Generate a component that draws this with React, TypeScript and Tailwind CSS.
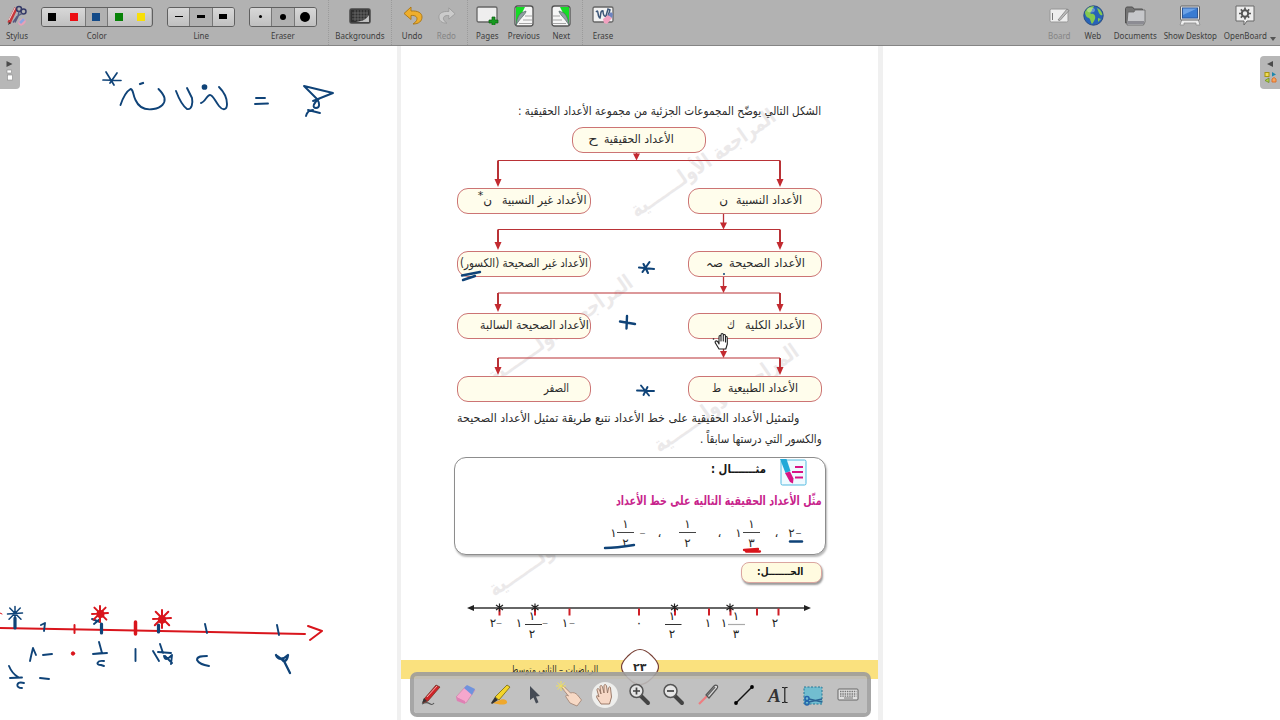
import { useLayoutEffect, useRef, type ReactNode } from "react";

const INK = "#0f4378";
const RED = "#d9151c";

/* Arabic text squeezed or stretched horizontally to fill its own box. */
function Fit({ children, className = "" }: { children: ReactNode; className?: string }) {
  const outer = useRef<HTMLSpanElement>(null);
  const inner = useRef<HTMLSpanElement>(null);
  useLayoutEffect(() => {
    const fit = () => {
      const o = outer.current;
      const i = inner.current;
      if (o && i && i.offsetWidth > 0) i.style.transform = `scaleX(${o.clientWidth / i.offsetWidth})`;
    };
    fit();
    document.fonts?.ready.then(fit);
  }, []);
  return (
    <span ref={outer} dir="rtl" className={`block shrink-0 whitespace-nowrap ${className}`}>
      <span ref={inner} className="inline-block origin-right">
        {children}
      </span>
    </span>
  );
}

function Tool({ label, w, dim = false, children }: { label: string; w: string; dim?: boolean; children: ReactNode }) {
  return (
    <div className={`flex shrink-0 flex-col items-center ${w}`}>
      <div className="flex h-[30px] items-center justify-center pt-[1px]">{children}</div>
      <span className={`scale-x-[.85] text-[9.4px] leading-[12px] whitespace-nowrap ${dim ? "text-[#858585]" : "text-[#3d3d3d]"}`}>{label}</span>
    </div>
  );
}

const Sep = ({ m }: { m: string }) => <div className={`h-[45px] w-px shrink-0 border-l border-dotted border-[#9b9b9b] ${m}`} />;

function Segments({ items, active, w }: { items: ReactNode[]; active: number; w: string }) {
  return (
    <div className={`mt-[2px] flex h-[20px] overflow-hidden rounded-[3px] border border-[#606060] ${w}`}>
      {items.map((it, i) => (
        <div
          key={i}
          className={`flex flex-1 items-center justify-center ${
            i === active ? "border-x border-[#777] bg-[#b1b1b1]" : "bg-linear-to-b from-[#d8d8d8] to-[#c0c0c0]"
          }`}
        >
          {it}
        </div>
      ))}
    </div>
  );
}

function PageTurn({ flip = false }: { flip?: boolean }) {
  return (
    <svg width="20" height="22" viewBox="0 0 20 22" className={flip ? "-scale-x-100" : ""}>
      <rect x="1" y="1" width="18" height="20" rx="2.5" fill="#f6f6f6" stroke="#555" strokeWidth="1.3" />
      <path d="M2 2h9L2 20z" fill="#15dc25" />
      <path d="M11 11h7M9 15h9M5 18.500h13" stroke="#a4a4a4" />
      <path d="M12 6c0 3-5 6-10 14 1-6 2-9 5-12z" fill="#8fa0a2" stroke="#566" strokeWidth=".7" />
    </svg>
  );
}

function TopBar() {
  const colors = ["bg-black", "bg-[#ec0d12]", "bg-[#134a88]", "bg-[#078207]", "bg-[#f8df08]"];
  const lines = ["h-px", "h-[3px]", "h-[5px]"];
  const dots = ["size-[3px]", "size-[6px]", "size-[10px]"];
  return (
    <header className="flex h-[46px] shrink-0 items-start border-b border-[#858585] bg-[#b2b2b2] font-['Noto_Sans','Open_Sans',sans-serif]">
      <Tool label="Stylus" w="w-[34px]">
        <svg width="22" height="22" viewBox="0 0 22 22" fill="none">
          <ellipse cx="16" cy="17" rx="4" ry="3" fill="#e8a0b8" transform="rotate(-40 16 17)" />
          <path d="M13 17l4-4 2 2-4 4z" fill="#8aa6e0" />
          <path d="M10 3L3 18" stroke="#c8363a" strokeWidth="3.500" />
          <path d="M9 3L3 15" stroke="#f0dede" strokeWidth="1" />
          <path d="M2 20l1-3 2 1z" fill="#333" />
          <circle cx="13" cy="4" r="2.500" stroke="#353a68" strokeWidth="1.500" />
          <circle cx="17.500" cy="6.500" r="2.500" stroke="#353a68" strokeWidth="1.500" />
          <path d="M13 6.500l-1 5-3 6M16 8.500l-5 3-4 6" stroke="#555a80" strokeWidth="1.400" />
        </svg>
      </Tool>
      <Tool label="Color" w="w-[125px]">
        <Segments w="w-[112px]" active={2} items={colors.map((c) => <span key={c} className={`size-[8px] ${c}`} />)} />
      </Tool>
      <Tool label="Line" w="w-[84px]">
        <Segments w="w-[68px]" active={1} items={lines.map((c) => <span key={c} className={`w-[8px] bg-black ${c}`} />)} />
      </Tool>
      <Tool label="Eraser" w="w-[80px]">
        <Segments w="w-[68px]" active={1} items={dots.map((c) => <span key={c} className={`rounded-full bg-black ${c}`} />)} />
      </Tool>
      <Sep m="ml-[5px]" />
      <Tool label="Backgrounds" w="w-[61px]">
        <svg width="22" height="16" viewBox="0 0 22 16">
          <rect x="1" y="1" width="20" height="14" rx="1.500" fill="#303030" stroke="#4a4a4a" strokeWidth="1.500" />
          <path d="M3 5h16M3 8h16M3 11h16M6 2v11M9 2v11M12 2v11M15 2v11M18 2v11" stroke="#747474" strokeWidth=".7" />
          <path d="M4 14c8 0 13-2 16-7v7z" fill="#e4e4e4" opacity=".8" />
        </svg>
      </Tool>
      <Sep m="ml-[1px]" />
      <Tool label="Undo" w="w-[41px]">
        <svg width="20" height="20" viewBox="0 0 20 20">
          <path d="M8 1L1 7.500l7 6v-4c5-.5 7 2 5.500 5-.7 1.500-2 2.500-3.500 3.500 6 0 9-3 9-7 0-4-4-6.500-11-6z" fill="#efae2c" stroke="#a97513" strokeWidth=".9" />
        </svg>
      </Tool>
      <Tool label="Redo" w="w-[27px]" dim>
        <svg width="18" height="20" viewBox="0 0 20 20" className="-scale-x-100">
          <path d="M8 1L1 7.500l7 6v-4c5-.5 7 2 5.500 5-.7 1.500-2 2.500-3.500 3.500 6 0 9-3 9-7 0-4-4-6.500-11-6z" fill="#cbcbcb" stroke="#979797" strokeWidth=".9" />
        </svg>
      </Tool>
      <Sep m="ml-[7px]" />
      <Tool label="Pages" w="w-[38px]">
        <svg width="23" height="19" viewBox="0 0 23 19">
          <rect x="1" y="1" width="20" height="15" rx="1.500" fill="#eee" stroke="#666" strokeWidth="1.300" />
          <path d="M16 11h3v3h3v3h-3v2.500h-3V17h-3v-3h3z" fill="#179a20" stroke="#0b5d12" strokeWidth=".7" />
        </svg>
      </Tool>
      <Tool label="Previous" w="w-[36px]">
        <PageTurn />
      </Tool>
      <Tool label="Next" w="w-[38px]">
        <PageTurn flip />
      </Tool>
      <Sep m="ml-[2px]" />
      <Tool label="Erase" w="w-[40px]">
        <svg width="22" height="19" viewBox="0 0 22 19">
          <rect x="1" y="1" width="20" height="15" rx="1.500" fill="#f2f2f2" stroke="#666" strokeWidth="1.300" />
          <path d="M4 6c3-4 1 5 4 6 1-2 0-8 3-7 0 3 1 6 3 5l2-7 2 1-2 6" fill="none" stroke="#3d5678" strokeWidth="1.500" />
          <path d="M11 13l5-4 4 3-5 6-3-1z" fill="#f1a1c0" />
          <path d="M16 9l3-3 2 2-1 4z" fill="#6d83bf" />
        </svg>
      </Tool>
      <div className="flex-1" />
      <Tool label="Board" w="w-[33px]" dim>
        <svg width="21" height="17" viewBox="0 0 21 17">
          <rect x="1" y="2" width="18" height="13" rx="1.500" fill="#ededed" stroke="#969696" />
          <path d="M3.500 6v7" stroke="#777" />
          <path d="M9 13l9-11 2 1.500-9 10z" fill="#bbb" stroke="#777" strokeWidth=".7" />
        </svg>
      </Tool>
      <Tool label="Web" w="w-[34px]">
        <svg width="21" height="21" viewBox="0 0 21 21">
          <circle cx="10.500" cy="10.500" r="9.700" fill="#2763b8" stroke="#294e80" />
          <path d="M2 7c2-4 5-6 9-6-1 2 0 2-2 3 1 2-3 3-1 5 3-1 5 2 4 5-1 2-2 4-3 5-2-3-1-4-3-6-2 0-4-3-4-6z" fill="#85c94f" />
          <path d="M14 3c3 1 5 4 5.500 7-2 1-3-1-4-3zM15 13l3 1-3 3z" fill="#85c94f" />
          <ellipse cx="8" cy="5" rx="4" ry="2.500" fill="#fff" opacity=".3" />
        </svg>
      </Tool>
      <Tool label="Documents" w="w-[50px]">
        <svg width="22" height="20" viewBox="0 0 22 20">
          <path d="M1.500 17V2.500L2.500 1h6l1.500 2h8.500v14z" fill="#737373" stroke="#515151" />
          <path d="M3 17l1-11h6l1-2h10v12l-1.500 3H3z" fill="#c6c7ca" stroke="#626262" strokeWidth=".8" />
          <path d="M4 15h16v3H3z" fill="#8c8c93" />
        </svg>
      </Tool>
      <Tool label="Show Desktop" w="w-[60px]">
        <svg width="22" height="21" viewBox="0 0 22 21">
          <path d="M3 14h16l2 6h-4v-2H5v2H1z" fill="#eee" stroke="#8d8d8d" strokeWidth=".8" />
          <rect x="1.500" y="1" width="19" height="14" rx="1" fill="#e2e2e2" stroke="#666" />
          <rect x="3.500" y="3" width="15" height="10" fill="#387bd2" stroke="#2c5798" />
          <path d="M4 3.500h14L4 10z" fill="#83b4ee" opacity=".7" />
        </svg>
      </Tool>
      <Tool label="OpenBoard" w="w-[50px]">
        <svg width="22" height="21" viewBox="0 0 22 21">
          <path d="M2 1h18v15h-7l-3 4v-4H2z" fill="#eee" stroke="#696969" />
          <circle cx="11" cy="8.500" r="3.200" fill="none" stroke="#555" strokeWidth="2" />
          <path d="M11 2.500v2.500M11 12v2.500M5 8.500h2.500M14.500 8.500H17M6.800 4.300l1.700 1.700M13.500 11l1.700 1.700M15.200 4.300L13.500 6M8.500 11l-1.700 1.700" stroke="#555" strokeWidth="1.700" />
        </svg>
      </Tool>
      <div className="flex h-[45px] w-[10px] items-end pb-[4px]">
        <span className="border-x-[3.5px] border-t-[4px] border-x-transparent border-t-[#555]" />
      </div>
    </header>
  );
}

type NodeSpec = { pos: string; pad: string; label: string; w: string; symbol?: ReactNode; gap?: string; sw?: string };

const nodes: NodeSpec[] = [
  { pos: "left-[171px] top-[2px]", pad: "pr-[31px]", label: "الأعداد الحقيقية", w: "w-[70px]", symbol: "ح", gap: "mr-[6px]", sw: "w-[10px]" },
  { pos: "left-[287px] top-[63px]", pad: "pr-[19px]", label: "الأعداد النسبية", w: "w-[66px]", symbol: "ن", gap: "mr-[8px]", sw: "w-[9px]" },
  {
    pos: "left-[56px] top-[63px]",
    pad: "pr-[4px]",
    label: "الأعداد غير النسبية",
    w: "w-[84px]",
    symbol: (
      <>
        ن<sup className="top-[-5px] text-[11px]">*</sup>
      </>
    ),
    gap: "mr-[10px]",
    sw: "w-[14px]",
  },
  { pos: "left-[287px] top-[126px]", pad: "pr-[16px]", label: "الأعداد الصحيحة", w: "w-[76px]", symbol: "صہ", gap: "mr-[6px]", sw: "w-[17px]" },
  { pos: "left-[56px] top-[126px]", pad: "pr-[2px]", label: "الأعداد غير الصحيحة (الكسور)", w: "w-[128px]" },
  { pos: "left-[287px] top-[188px]", pad: "pr-[16px]", label: "الأعداد الكلية", w: "w-[60px]", symbol: "ك", gap: "mr-[10px]", sw: "w-[8px]" },
  { pos: "left-[56px] top-[188px]", pad: "pr-[1px]", label: "الأعداد الصحيحة السالبة", w: "w-[109px]" },
  { pos: "left-[287px] top-[251px]", pad: "pr-[23px]", label: "الأعداد الطبيعية", w: "w-[70px]", symbol: "ط", gap: "mr-[7px]", sw: "w-[9px]" },
  { pos: "left-[56px] top-[251px]", pad: "pr-[21px]", label: "الصفر", w: "w-[25px]" },
];

/* stem x, stem top, bar y, branch bottom */
const links = [
  [235.5, 28, 35.5, 62],
  [322.5, 89, 104.5, 125],
  [322.5, 152, 168, 187],
  [322.5, 214, 233, 250],
];

function Diagram() {
  return (
    <div className="relative h-[280px]">
      <svg className="absolute inset-0" width="477" height="280" fill="none" stroke="#b93236">
        {links.map(([x, t, y, b]) => (
          <g key={y}>
            <path d={`M${x} ${t}V${y - 3}`} strokeWidth="1.3" />
            <path d={`M${x - 3.5} ${y - 7}h7l-3.5 7z`} fill="#c32a30" stroke="none" />
            <path d={`M97 ${y}H379`} strokeWidth="1.2" />
            <path d={`M97 ${y}V${b - 4}M379 ${y}V${b - 4}`} strokeWidth="2" />
            <path d={`M93.5 ${b - 8}h7l-3.5 8zM375.5 ${b - 8}h7l-3.5 8z`} fill="#c32a30" stroke="none" />
          </g>
        ))}
      </svg>
      {nodes.map((n) => (
        <div
          key={n.label}
          dir="rtl"
          className={`absolute flex h-[26px] w-[134px] items-center rounded-[11px] border border-[#cc7474] bg-[#fffdec] pb-[2px] ${n.pos} ${n.pad}`}
        >
          <Fit className={n.w}>{n.label}</Fit>
          {n.symbol && <Fit className={`${n.sw} ${n.gap}`}>{n.symbol}</Fit>}
        </div>
      ))}
    </div>
  );
}

function Frac({ d, m }: { d: string; m: string }) {
  return (
    <span className={`flex w-[17px] shrink-0 flex-col items-center ${m}`}>
      <span className="h-[16px] leading-[16px]">١</span>
      <span className="h-[1.500px] w-full bg-[#444]" />
      <span className="h-[17px] pt-[2px] leading-[16px]">{d}</span>
    </span>
  );
}

const Cell = ({ children, m }: { children: ReactNode; m: string }) => (
  <span className={`flex w-[7px] shrink-0 justify-center ${m}`}>{children}</span>
);

function Example() {
  return (
    <section className="ml-[53px] h-[98px] w-[372px] rounded-[12px] border border-[#8d8d8d] bg-white shadow-[1px_2px_2px_rgba(0,0,0,0.28)]">
      <div dir="rtl" className="flex h-[29px] items-start pr-[18px]">
        <svg width="27" height="27" viewBox="0 0 27 27" className="mt-[1px]">
          <rect x="1" y="1" width="25" height="25" rx="1.500" fill="#effaff" stroke="#51b9df" />
          <path d="M0 0h6.500l4 12-5 2z" fill="#22a9d8" />
          <path d="M5 14l5-1.500 3.500 7-.5 5-3-1.500z" fill="#d81485" />
          <path d="M15 8h8M12 13h11M15 18.500h8" stroke="#d81485" strokeWidth="2" />
        </svg>
        <Fit className="mt-[2px] mr-[14px] w-[55px] text-[12px] leading-[18px] font-bold text-[#171717]">مثـــــــال :</Fit>
      </div>
      <div dir="rtl" className="flex h-[28px] items-center pr-[3px]">
        <Fit className="w-[206px] text-[13px] font-bold text-[#c8248c]">مثّل الأعداد الحقيقية التالية على خط الأعداد</Fit>
      </div>
      <div dir="ltr" className="flex h-[36px] items-center pl-[155px] text-[12px]">
        <Cell m="">١</Cell>
        <Frac d="٢" m="" />
        <Cell m="ml-[5px] text-[#888]">–</Cell>
        <Cell m="ml-[10px]">،</Cell>
        <Frac d="٢" m="ml-[16px]" />
        <Cell m="ml-[20px]">،</Cell>
        <Cell m="ml-[12px]">١</Cell>
        <Frac d="٣" m="ml-[1px]" />
        <Cell m="ml-[13px]">،</Cell>
        <Cell m="ml-[8px]">٢</Cell>
        <Cell m="text-[#666]">–</Cell>
      </div>
    </section>
  );
}

const star = (x: number, y: number) => `M${x} ${y - 4}v8M${x - 3.500} ${y - 2.500}l7 5M${x - 3.500} ${y + 2.500}l7-5`;

function NumberLine() {
  const ticks = [98.500, 134, 168.500, 238, 274, 308, 329.500, 356, 377.500];
  return (
    <svg width="477" height="60" className="block text-[12px]" fill="#222" textAnchor="middle">
      <path d="M70 14H406" stroke="#333" strokeWidth="1.300" />
      <path d="M66 14l7-3v6zM410 14l-7-3v6z" />
      <path d={ticks.map((t) => `M${t} 14.500v7`).join("")} stroke="#cf1f27" strokeWidth="2" />
      <path d={[98.500, 134, 273.500, 329].map((t) => star(t, 13.500)).join("")} stroke="#222" strokeWidth="1.200" />
      <path d="M124 30.500h17M264 30.500h16.500" stroke="#333" strokeWidth="1.200" />
      <path d="M327 30.500h17" stroke="#aaa" strokeWidth="1.200" />
      <g>
        <text x="92" y="33">٢</text>
        <text x="98" y="33" fill="#888">–</text>
        <text x="118" y="33">١</text>
        <text x="131" y="26">١</text>
        <text x="131" y="44">٢</text>
        <text x="144" y="33" fill="#888">–</text>
        <text x="164" y="33">١</text>
        <text x="171" y="33" fill="#888">–</text>
        <text x="238" y="33">٠</text>
        <text x="271" y="26">١</text>
        <text x="271" y="44">٢</text>
        <text x="307" y="33">١</text>
        <text x="323" y="33">١</text>
        <text x="335" y="26">١</text>
        <text x="335" y="44">٣</text>
        <text x="374" y="33">٢</text>
      </g>
    </svg>
  );
}

const marks = [
  "left-[216px] top-[102px]",
  "left-[73px] top-[268px]",
  "left-[239px] top-[337px]",
  "left-[74px] top-[481px]",
];

function BookPage() {
  return (
    <article className="relative flex h-full w-[477px] shrink-0 flex-col overflow-hidden bg-white font-['DejaVu_Sans',sans-serif] text-[12px] leading-[18px] text-[#2b2b2b]">
      {marks.map((pos) => (
        <div key={pos} className={`absolute w-[172px] -rotate-[35deg] ${pos}`}>
          <Fit className="w-[172px] text-[21px] leading-[30px] font-bold text-[#ebe9ea]">المراجعة الأولـــــــية</Fit>
        </div>
      ))}
      <div className="relative flex flex-col">
        <div dir="rtl" className="flex h-[79px] items-end pr-[57px] pb-[5px]">
          <Fit className="w-[303px]">الشكل التالي يوضّح المجموعات الجزئية من مجموعة الأعداد الحقيقية :</Fit>
        </div>
        <Diagram />
        <div dir="rtl" className="flex h-[52px] flex-col gap-[3px] pt-[4px] pr-[56px]">
          <Fit className="mr-[23px] w-[342px]">ولتمثيل الأعداد الحقيقية على خط الأعداد نتبع طريقة تمثيل الأعداد الصحيحة</Fit>
          <Fit className="w-[122px]">والكسور التي درستها سابقاً .</Fit>
        </div>
        <Example />
        <div className="mt-[7px] ml-[340px] flex h-[21px] w-[81px] items-center justify-center rounded-[8px] border border-[#dba6a0] bg-[#fffbe0] pr-[2px] pb-[2px] shadow-[1px_2px_2px_rgba(0,0,0,0.4)]">
          <Fit className="w-[46px] text-[11px] font-bold text-[#171717]">الحـــــــل:</Fit>
        </div>
        <div className="mt-[11px] h-[66px]">
          <NumberLine />
        </div>
        <footer className="relative flex h-[19px] items-center bg-[#fae17e]">
          <Fit className="ml-[110px] w-[87px] text-[10px] leading-[16px]">الرياضيات – الثاني متوسط</Fit>
          <svg width="38" height="38" viewBox="0 0 38 38" className="absolute top-[-12px] left-[220px]">
            <path d="M19 1.500c5 0 8 2.500 11.500 6s7 6.500 7 11.500-3.500 8-7 11.500-6.500 6-11.500 6-8-2.500-11.500-6-7-6.500-7-11.500 3.500-8 7-11.500 6.500-6 11.500-6z" fill="#fff" stroke="#784136" strokeWidth="1.200" />
          </svg>
          <span className="absolute top-[-1px] left-[232px] text-[11px] font-bold">٢٣</span>
        </footer>
      </div>
    </article>
  );
}

const burst = (x: number, y: number, r: number) =>
  `M${x} ${y - r}L${x} ${y + r}M${x - r} ${y}L${x + r} ${y - 1}M${x - r * 0.7} ${y - r * 0.800}L${x + r * 0.800} ${y + r * 0.700}M${x + r * 0.700} ${y - r * 0.800}L${x - r * 0.800} ${y + r * 0.700}`;

function Ink() {
  return (
    <svg className="pointer-events-none absolute inset-0" width="1280" height="674" viewBox="0 46 1280 674" fill="none" strokeLinecap="round" strokeLinejoin="round">
      <g stroke={INK} strokeWidth="1.900">
        <path d="M106 72l8 13M117 73l-7 10M103 80l18 .5" strokeWidth="1.700" />
        <path d="M120.500 105c2-6 5-13 10-16 3 0 2 5 5 11 4 9 12 10 18 9 8-1 12-6 11-11-1-4-4-7-6-9" />
        <path d="M140 84l3-1" strokeWidth="2.300" />
        <path d="M176 91c3 8 7 15 11 18 5 1 6-6 5-11l-5-10" />
        <path d="M201 103c4-1 6-8 9-8s5 6 9 11c4 5 8 4 8-2 0-7-4-13-8-17" />
        <circle cx="204.500" cy="87" r="1.900" fill={INK} />
        <path d="M256 98h9M255 104l13-.5" />
        <path d="M304 86l29 7-20 8M304 86l13 13c3 4 3 9-1 9s-3-5 3-9M306 116c1-4 4-6 7-6M308 110l12 3" />
      </g>
      <g stroke={INK} strokeWidth="2.400">
        <path d="M639 267.500l15 1.500M649.500 262l-7 10M643.500 264l4.500 9" strokeWidth="2.100" />
        <path d="M620 321.500l15 2.500M627 316l-.5 12.500" />
        <path d="M637 390.500l17 .5M641 385.500l8 10M647.500 387l-4 8" strokeWidth="1.900" />
        <path d="M462 275.500l18-3.500M463 280l12-4" />
        <path d="M790 541.500h12" />
        <path d="M605 548c9 0 17-1 29-3" />
      </g>
      <circle cx="724" cy="274" r="1" fill={INK} />
      <path d="M744 550l14-1M746 551.500h14" stroke={RED} strokeWidth="2.300" />

      <path d="M0 628l110 2 100 2 95 2" stroke={RED} strokeWidth="2" />
      <path d="M308 626l14 5-12 9M74.500 625v8" stroke={RED} strokeWidth="2" />
      <path d="M135.500 622v12" stroke={RED} strokeWidth="3.500" />
      <path d="M0 613l2 1" stroke={RED} />
      <circle cx="73" cy="653.500" r="1.700" fill={RED} stroke={RED} />
      <g stroke={INK} strokeWidth="1.900">
        <path d={burst(15, 614, 7.5)} strokeWidth="1.500" />
        <path d="M15 618v10M101.500 624v9M158.500 625v7" strokeWidth="3.200" />
        <path d="M41 625l4-2-1 8M92 619l8 3M94 624l6-5M205 624l2 9M277 625l2 10" />
        <path d="M30 661c1-5 2-9 3-13l3 7M43 655l9-1" />
        <path d="M99 642l3 11-9 1 14-1M104 661c-7-1-9 4-3 4l3 1" />
        <path d="M135.500 649v12M153 651l6 10M160 644l3 9M158 652l13 1M164 656c1 5 4 3 8-1l-1 9M165 656l7 7" />
        <path d="M207 656c-5 0-10 0-10 4 2 4 6 5 12 6" />
        <path d="M276 655c2 5 7 5 12 0-1 7-6 8-5 4l7 14M277 656l7 5" strokeWidth="2.300" />
        <path d="M9 666c2 5 4 8 9 11M10 678l12-.5M24 683c-8-2-9 5-2 5M40 678l9 1" />
      </g>
      <g stroke={RED} strokeWidth="2" fill={RED}>
        <path d={burst(100, 614, 8)} />
        <circle cx="100.500" cy="614" r="4" stroke="none" />
        <path d={burst(162, 619, 9)} />
        <circle cx="162" cy="619.500" r="4.200" stroke="none" />
      </g>

      <path d="M719 349l-3-5c-2-3 0-4 2-2l1 2v-7c0-2 2-2 2 0v4-6c0-2 2.300-2 2.300 0v6-5c0-2 2.200-2 2.200 0v6-4c0-2 1.800-2 1.800 0v6l-1.500 5z" fill="#fff" stroke="#222" strokeWidth="1.100" />
      <circle cx="713.500" cy="339" r=".8" fill="#222" />
    </svg>
  );
}

function Palette() {
  const icons: ReactNode[] = [
    <g key="pen">
      <path d="M3 21c8-5 8 4 12-1" fill="none" stroke="#555" strokeWidth="1.200" />
      <path d="M5 16L17 2l4 2L9 18l-5 2z" fill="#cf2429" stroke="#632" strokeWidth=".7" />
      <path d="M8 14L18 3" stroke="#f2aaaa" />
      <path d="M3 20l2-5 3 3z" fill="#333" />
    </g>,
    <g key="eraser">
      <path d="M2 14L12 3l9 4-9 13z" fill="#f5a7cd" stroke="#c77da4" strokeWidth=".6" />
      <path d="M10 5l3-3 8 4-3 6z" fill="#6f93dd" />
      <path d="M2 14l9 4v3l-8-3z" fill="#df80b4" />
    </g>,
    <g key="marker">
      <path d="M9 18c6-4 10 0 9 2-3 3-9 1-15 0z" fill="#efa82d" />
      <path d="M6 14L18 2l3 2L10 17z" fill="#f4d52b" stroke="#77670c" strokeWidth=".8" />
      <path d="M6 14l3 3-6 4-1-1z" fill="#333" />
    </g>,
    <path key="arrow" d="M7 3v14l3.500-2.500 2.500 6 2.500-1.200-2.500-5.800 4-.5z" fill="#454b55" />,
    <g key="point">
      <path d="M12 20l-4-6c-1-2 1-2 2.500-1L4 5c-1-2 1-3 2.500-1l6 6c3-1 5 0 7 2l4 5-4.500 6z" fill="#f7d9c5" stroke="#9e8070" strokeWidth=".8" />
      <path d="M3-2v10M-2 3h10M-.5-.5l7 7M6.500-.5l-7 7" stroke="#eedf62" strokeWidth="1" />
    </g>,
    <g key="hand">
      <circle cx="12" cy="12" r="13" fill="#eeeeec" />
      <path d="M8 21L4 15c-1-3 0-3 2-1L4 7c0-2 1.500-2 2.500 0L8 11 7 4c0-2 2-2 2.500 0l1.500 6V3c0-2 2-2 2.500 0l1 7 1-5c1-2 2-1 2 0l1 9-2 7z" fill="#f7d8c6" stroke="#92705f" strokeWidth=".9" />
    </g>,
    <g key="in">
      <path d="M13 13l7 7" stroke="#444" strokeWidth="4" strokeLinecap="round" />
      <circle cx="8.500" cy="8" r="6.500" fill="#e6e6e6" stroke="#555" strokeWidth="1.500" />
      <path d="M5 8h7M8.500 4.500v7" stroke="#444" strokeWidth="1.700" />
    </g>,
    <g key="out">
      <path d="M13 13l7 7" stroke="#444" strokeWidth="4" strokeLinecap="round" />
      <circle cx="8.500" cy="8" r="6.500" fill="#e6e6e6" stroke="#555" strokeWidth="1.500" />
      <path d="M5 8h7" stroke="#444" strokeWidth="1.700" />
    </g>,
    <g key="laser">
      <path d="M2 21l8-8" stroke="#ef7d80" strokeWidth="2.200" />
      <path d="M9 12l8-9c2-2 5 0 3 2.500L12 15z" fill="#ddd" stroke="#555" strokeWidth="1.200" />
      <path d="M10 13l8-9" stroke="#666" strokeWidth="1.500" />
    </g>,
    <g key="line">
      <path d="M4 20L20 4" stroke="#111" strokeWidth="1.500" />
      <circle cx="4" cy="20" r="1.900" />
      <circle cx="20" cy="4" r="1.900" />
    </g>,
    <g key="text">
      <text x="1" y="19" className="font-['Liberation_Serif',serif] text-[19px] font-bold italic" fill="#333">A</text>
      <path d="M15 4.500h2l.8 1 .8-1h2M17.800 5v14M15 19.500h2l.8-1 .8 1h2" fill="none" stroke="#222" strokeWidth="1.200" />
    </g>,
    <g key="capture">
      <rect x="3" y="4" width="18" height="17" fill="#72bdd0" stroke="#247795" strokeDasharray="2 1.500" />
      <path d="M8 16l13 3M8 19l13-3" stroke="#2c6494" strokeWidth="1.300" />
      <circle cx="6" cy="15.500" r="2" fill="none" stroke="#2464ac" strokeWidth="1.500" />
      <circle cx="6" cy="20" r="2" fill="none" stroke="#2464ac" strokeWidth="1.500" />
    </g>,
    <g key="keys">
      <rect x="2" y="6" width="20" height="11" rx="1" fill="#e1e1e1" stroke="#666" />
      <path d="M4 8.500h16.500M4 11h16.500M4 13.200h16.500" stroke="#777" strokeWidth="1.300" strokeDasharray="1.500 .8" />
      <path d="M8 15h9" stroke="#777" />
    </g>,
  ];
  return (
    <nav className="absolute top-[626px] left-[410px] flex h-[45px] w-[461px] items-center justify-between rounded-[7px] border-[4px] border-[#9c9c9c]/90 bg-[#bababa]/90 bg-clip-padding pr-[7px] pl-[5px]">
      {icons.map((icon, i) => (
        <svg key={i} width="24" height="24" viewBox="0 0 24 24" className="overflow-visible">
          {icon}
        </svg>
      ))}
    </nav>
  );
}

function SideTabs() {
  return (
    <>
      <div className="absolute top-[10px] left-0 flex h-[33px] w-[20px] flex-col items-center rounded-r-[4px] bg-[#b7b7b7] pt-[5px]">
        <svg width="20" height="24" viewBox="0 0 20 24">
          <path d="M6.500 0l6 3-6 3z" fill="#4b4b4b" />
          <rect x="7" y="9" width="4.500" height="3" fill="#fff" stroke="#888" strokeWidth=".6" />
          <rect x="7.500" y="14" width="5" height="5" fill="#fff" stroke="#888" strokeWidth=".6" />
        </svg>
      </div>
      <div className="absolute top-[10px] right-0 flex h-[33px] w-[20px] flex-col items-center rounded-l-[4px] bg-[#b7b7b7] pt-[5px]">
        <svg width="20" height="24" viewBox="0 0 20 24">
          <path d="M13 0L7 3l6 3z" fill="#4b4b4b" />
          <rect x="5" y="11.500" width="4" height="4" fill="#f0dc55" stroke="#a8940e" />
          <path d="M12 11l4 2.500-4 2z" fill="#1d87ad" />
          <path d="M9 17l-4 2.500 4 2z" fill="#b5d34a" stroke="#6c8c20" strokeWidth=".8" />
          <path d="M12 21v-3l2-1.500 2 1.500v3z" fill="#f6a45d" stroke="#dd6b25" strokeWidth=".9" />
        </svg>
      </div>
    </>
  );
}

export default function App() {
  return (
    <div className="flex h-[720px] w-[1280px] flex-col overflow-hidden bg-white">
      <TopBar />
      <main className="relative flex h-[674px] bg-white">
        <div className="w-[397px] shrink-0" />
        <div className="w-[4px] shrink-0 bg-[#f0f0f0]" />
        <BookPage />
        <div className="w-[5px] shrink-0 bg-[#f0f0f0]" />
        <SideTabs />
        <Ink />
        <Palette />
      </main>
    </div>
  );
}
